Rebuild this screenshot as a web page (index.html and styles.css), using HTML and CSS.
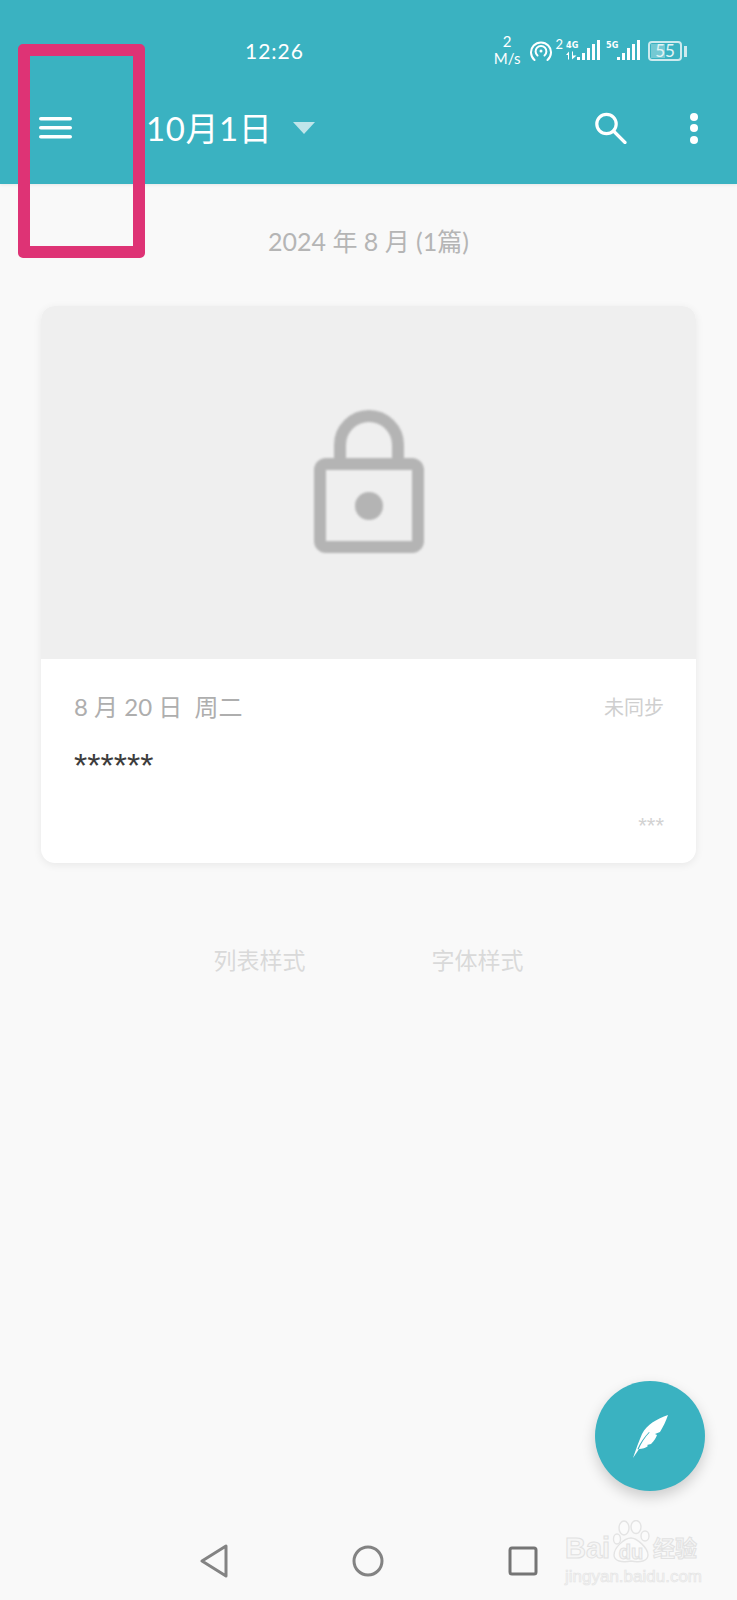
FILE: index.html
```html
<!DOCTYPE html>
<html lang="zh-CN">
<head>
    <meta charset="UTF-8">
    <meta name="viewport" content="width=device-width, initial-scale=1.0">
    <title>日记</title>
    <link rel="stylesheet" href="styles.css">
</head>
<body>
    <div class="page">
        <header class="header">
            <div class="status-bar">
                <span class="time">12:26</span>
                <div class="status-icons">
                    <div class="speed"><span>2</span><span>M/s</span></div>
                    <svg class="hotspot" width="22" height="22" viewBox="0 0 22 22" fill="none" stroke="#fff" stroke-linecap="round">
                        <path d="M4.5 20A10 10 0 1 1 17.5 20" stroke-width="2"/>
                        <path d="M7.5 15.5A5.4 5.4 0 1 1 14.5 15.5" stroke-width="2"/>
                        <circle cx="11" cy="11" r="1.5" fill="#fff" stroke="none"/>
                    </svg>
                    <span class="sup">2</span>
                    <div class="signal">
                        <div class="net">
                            <span>4G</span>
                            <svg width="11" height="9" viewBox="0 0 11 9" fill="#fff">
                                <path d="M0 4L3 0.5V8.5H2V4ZM6 0.5H7V4.5L10.5 4.5L6 8.5Z"/>
                            </svg>
                        </div>
                        <div class="bars">
                            <i class="b0"></i><i class="b1"></i><i class="b2"></i><i class="b3"></i><i class="b4"></i>
                        </div>
                    </div>
                    <div class="signal">
                        <div class="net"><span>5G</span></div>
                        <div class="bars">
                            <i class="b0"></i><i class="b1"></i><i class="b2"></i><i class="b3"></i><i class="b4"></i>
                        </div>
                    </div>
                    <div class="battery">
                        <div class="battery-body"><span class="battery-fill"></span><span class="battery-num">55</span></div>
                        <div class="battery-cap"></div>
                    </div>
                </div>
            </div>
            <div class="toolbar">
                <svg class="menu-icon" width="34" height="22" viewBox="0 0 34 22" fill="#fff">
                    <rect x="0" y="0" width="33" height="3.6" rx="1.8"/>
                    <rect x="0" y="9" width="33" height="3.6" rx="1.8"/>
                    <rect x="0" y="18" width="33" height="3.6" rx="1.8"/>
                </svg>
                <div class="title">10月1日</div>
                <div class="arrow"></div>
                <svg class="search-icon" width="32" height="32" viewBox="0 0 32 32" fill="none" stroke="#fff" stroke-width="3.2" stroke-linecap="round">
                    <circle cx="11.5" cy="12" r="9.7"/>
                    <path d="M18.5 19L30 30.5"/>
                </svg>
                <div class="more"><i></i><i></i><i></i></div>
            </div>
        </header>

        <main class="content">
            <div class="month">2024 年 8 月 (1篇)</div>

            <div class="card">
                <div class="card-cover">
                    <svg class="lock" width="110" height="143" viewBox="0 0 110 143" fill="none" stroke="#b4b4b4" stroke-width="12">
                        <path d="M26 54V35a29 29 0 0 1 58 0V54"/>
                        <rect x="6" y="54" width="98" height="83" rx="6"/>
                        <circle cx="55" cy="96" r="14" fill="#b4b4b4" stroke="none"/>
                    </svg>
                </div>
                <div class="card-body">
                    <div class="card-top">
                        <span class="card-date">8 月 20 日&nbsp; 周二</span>
                        <span class="card-sync">未同步</span>
                    </div>
                    <div class="card-text">******</div>
                    <div class="card-foot">***</div>
                </div>
            </div>

            <div class="links">
                <span>列表样式</span>
                <span>字体样式</span>
            </div>
        </main>

        <button class="fab">
            <svg width="35" height="43" viewBox="0 0 35 43" fill="#fff">
                <path d="M35 0C24 4 14 9 9 19C6 26 3 34 0 43C2 40 4 37 6 34C9 34 13 33 15 31L14 30L18 29C21 26 23 23 24 20L22 19L27 17C30 12 33 6 35 0Z"/>
                <path d="M4.5 34C7 28 11 22 16 17L16.6 17.6C12 22.5 8 28.5 5.5 34.5Z" fill="#3ab2c1"/>
            </svg>
        </button>

        <nav class="nav-bar">
            <svg width="28" height="34" viewBox="0 0 28 34" fill="none" stroke="#838383" stroke-width="3" stroke-linejoin="round">
                <path d="M26 2V32L2 17Z"/>
            </svg>
            <svg width="32" height="32" viewBox="0 0 32 32" fill="none" stroke="#838383" stroke-width="3">
                <circle cx="16" cy="16" r="14"/>
            </svg>
            <svg width="30" height="30" viewBox="0 0 30 30" fill="none" stroke="#757575" stroke-width="3" stroke-linejoin="round">
                <rect x="2" y="2" width="26" height="26" rx="2"/>
            </svg>
        </nav>

        <div class="watermark">
            <div class="wm-logo">
                <span class="wm-bai">Bai</span>
                <div class="wm-du">
                    <svg class="paw" width="38" height="44" viewBox="0 0 38 44" fill="#fbfbfb" stroke="#e4e4e4" stroke-width="1.4">
                        <ellipse cx="12" cy="8" rx="5" ry="7"/>
                        <ellipse cx="24" cy="7" rx="5" ry="6.5"/>
                        <ellipse cx="33" cy="16" rx="4" ry="5"/>
                        <ellipse cx="5" cy="19" rx="3.5" ry="5"/>
                        <path d="M19 18C25 18 36 28 36 35C36 41 28 43 19 41C10 43 2 41 2 35C2 28 12 18 19 18Z"/>
                    </svg>
                    <span>du</span>
                </div>
                <span class="wm-cn">经验</span>
            </div>
            <div class="wm-url">jingyan.baidu.com</div>
        </div>

        <div class="mark"></div>
    </div>
</body>
</html>
```

FILE: styles.css
```css
* {
    box-sizing: border-box;
}

html, body {
    margin: 0;
    padding: 0;
}

body {
    font-family: "Lato", "Noto Sans CJK SC", sans-serif;
    background-color: #f9f9f9;
}

.page {
    position: relative;
    width: 737px;
    height: 1600px;
    overflow: hidden;
}

/* header */
.header {
    height: 184px;
    background-color: #3ab2c1;
    color: #fff;
    box-shadow: 0 1px 3px rgba(0, 0, 0, 0.08);
}

.status-bar {
    position: relative;
    height: 91px;
    padding: 33px 50px 0 0;
    display: flex;
    justify-content: flex-end;
}

.time {
    position: absolute;
    left: 245px;
    top: 37px;
    font-size: 21px;
    line-height: 28px;
    letter-spacing: 1px;
}

.status-icons {
    display: flex;
    align-items: flex-start;
    height: 34px;
}

.speed {
    display: flex;
    flex-direction: column;
    align-items: center;
    font-size: 15px;
    line-height: 17px;
    margin-right: 10px;
}

.hotspot {
    margin-top: 7px;
}

.sup {
    font-size: 13px;
    line-height: 14px;
    margin: 4px 3px 0 3px;
}

.signal {
    position: relative;
    display: flex;
    height: 20px;
    margin: 7px 6px 0 0;
}

.net {
    display: flex;
    flex-direction: column;
    justify-content: space-between;
    width: 11px;
    height: 20px;
    font-family: "DejaVu Sans", sans-serif;
    font-stretch: condensed;
    font-size: 9px;
    font-weight: 700;
    line-height: 10px;
}

.bars {
    display: flex;
    align-items: flex-end;
    gap: 2px;
}

.bars i {
    display: block;
    width: 3px;
    background-color: #fff;
}

.b0 { height: 3px; }
.b1 { height: 7px; }
.b2 { height: 12px; }
.b3 { height: 16px; }
.b4 { height: 20px; }

.battery {
    display: flex;
    align-items: center;
    margin: 8px 0 0 2px;
}

.battery-body {
    position: relative;
    width: 34px;
    height: 20px;
    border: 2px solid #cdeaee;
    border-radius: 4px;
    font-size: 17px;
    line-height: 16px;
    text-align: center;
}

.battery-fill {
    position: absolute;
    left: 1px;
    top: 1px;
    bottom: 1px;
    width: 14px;
    background-color: rgba(255, 255, 255, 0.3);
}

.battery-num {
    position: relative;
    color: #e3f4f6;
}

.battery-cap {
    width: 3px;
    height: 11px;
    margin-left: 2px;
    background-color: #cdeaee;
}

.toolbar {
    display: flex;
    align-items: center;
    height: 74px;
    padding-left: 39px;
}

.menu-icon {
    margin-right: 73px;
}

.title {
    font-size: 33px;
    line-height: 44px;
    letter-spacing: 0.6px;
    width: 147px;
}

.arrow {
    width: 0;
    height: 0;
    border-left: 11px solid transparent;
    border-right: 11px solid transparent;
    border-top: 12px solid #bfe5ea;
    margin-right: 280px;
}

.search-icon {
    margin-right: 63px;
}

.more {
    display: flex;
    flex-direction: column;
    gap: 3.5px;
}

.more i {
    display: block;
    width: 8px;
    height: 8px;
    border-radius: 50%;
    background-color: #fff;
}

/* list */
.content {
    padding: 0 41px;
}

.month {
    margin-top: 42px;
    text-align: center;
    font-size: 25px;
    line-height: 30px;
    color: #b5b5b5;
}

.card {
    margin-top: 50px;
    width: 655px;
    height: 557px;
    background-color: #fff;
    border-radius: 14px;
    overflow: hidden;
    box-shadow: 0 2px 8px rgba(0, 0, 0, 0.07);
}

.card-cover {
    height: 353px;
    background-color: #efefef;
    display: flex;
    justify-content: center;
    align-items: center;
    padding-bottom: 2px;
}

.lock {
    filter: blur(1px);
}

.card-body {
    padding: 32px 32px 0 33px;
}

.card-top {
    display: flex;
    justify-content: space-between;
    align-items: center;
}

.card-date {
    font-size: 24px;
    line-height: 32px;
    color: #aeaeae;
}

.card-sync {
    font-size: 20px;
    line-height: 28px;
    color: #cfcfcf;
}

.card-text {
    margin-top: 27px;
    font-family: "Liberation Sans", sans-serif;
    font-size: 34px;
    line-height: 30px;
    color: #3c3c3c;
}

.card-foot {
    margin-top: 34px;
    text-align: right;
    font-family: "Liberation Sans", sans-serif;
    font-size: 22px;
    line-height: 24px;
    color: #d2d2d2;
}

.links {
    display: flex;
    justify-content: center;
    gap: 126px;
    margin-top: 82px;
    font-size: 23px;
    line-height: 30px;
    color: #d9d9d9;
}

/* floating button */
.fab {
    position: absolute;
    left: 595px;
    top: 1381px;
    width: 110px;
    height: 110px;
    border: none;
    border-radius: 50%;
    background-color: #3ab2c1;
    box-shadow: 0 6px 14px rgba(0, 0, 0, 0.18);
    display: flex;
    align-items: center;
    justify-content: center;
    padding: 0;
}

/* bottom nav */
.nav-bar {
    position: absolute;
    left: 200px;
    top: 1544px;
    display: flex;
    gap: 124px;
    align-items: center;
}

/* picture watermark */
.watermark {
    position: absolute;
    left: 565px;
    top: 1520px;
    width: 134px;
    color: #f6f6f6;
}

.wm-logo {
    display: flex;
    align-items: flex-end;
    height: 44px;
    font-family: "Liberation Sans", "Noto Sans CJK SC", sans-serif;
    font-weight: 700;
    -webkit-text-stroke: 1px #e2e2e2;
}

.wm-bai {
    font-size: 29px;
    line-height: 32px;
    width: 47px;
}

.wm-du {
    position: relative;
    width: 38px;
    height: 44px;
    font-size: 20px;
    line-height: 24px;
    text-align: center;
}

.paw {
    position: absolute;
    left: 0;
    top: 0;
}

.wm-du span {
    position: absolute;
    left: 0;
    right: 0;
    bottom: 0;
}

.wm-cn {
    font-size: 22px;
    line-height: 30px;
    margin-left: 3px;
    white-space: nowrap;
}

.wm-url {
    margin-top: 3px;
    font-family: "Liberation Sans", sans-serif;
    font-size: 17px;
    line-height: 20px;
    color: #f4f4f4;
    -webkit-text-stroke: 0.6px #e4e4e4;
    white-space: nowrap;
}

/* pink box drawn on the screenshot */
.mark {
    position: absolute;
    left: 18px;
    top: 44px;
    width: 127px;
    height: 214px;
    border: 12px solid #de3375;
    border-radius: 5px;
}
```
